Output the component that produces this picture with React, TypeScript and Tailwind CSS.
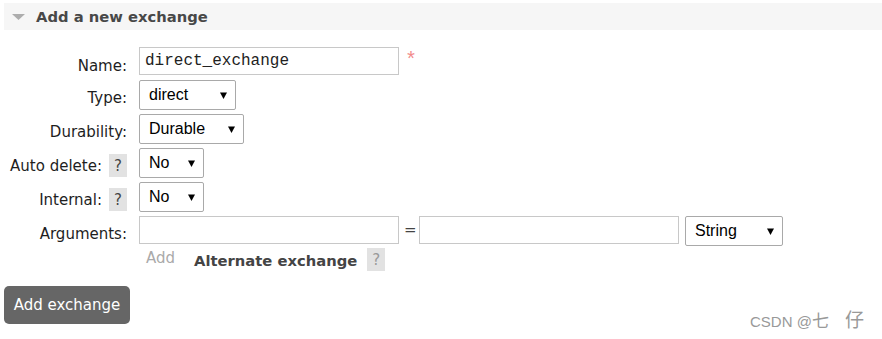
import React from "react";

const sans = "font-['DejaVu_Sans','Verdana',sans-serif]";

function Arrow() {
  return (
    <svg width="7" height="7" viewBox="0 0 7 7" className="shrink-0">
      <polygon points="0,0.5 7,0.5 3.5,7" fill="#000" />
    </svg>
  );
}

function Sel({ label, cls }: { label: string; cls: string }) {
  return (
    <div
      className={`flex h-[30px] items-center rounded-[2px] border border-[#a9a9a9] bg-white pl-[9px] pr-[8px] font-['Liberation_Sans',Arial,sans-serif] text-[16px] leading-[18px] text-black ${cls}`}
    >
      <span className="flex-1">{label}</span>
      <Arrow />
    </div>
  );
}

function TextInput({ value }: { value?: string }) {
  return (
    <div className="flex h-[28px] w-[260px] items-center border border-[#c8c8c8] bg-white pl-[5px] font-['Liberation_Mono','Courier_New',monospace] text-[16px] leading-[18px] text-[#222]">
      {value}
    </div>
  );
}

function Help({ dim }: { dim?: boolean }) {
  return (
    <div
      className={`flex h-[23px] w-[18px] items-center justify-center bg-[#e2e2e2] text-[15px] leading-[20px] ${
        dim ? "text-[#999]" : "text-[#444]"
      }`}
    >
      ?
    </div>
  );
}

function Label({ text, help }: { text: string; help?: boolean }) {
  return (
    <div className="flex w-[127px] shrink-0 items-start justify-end">
      <span className="pt-[8px] text-[15px] leading-[20px] text-[#1e1e1e]">{text}</span>
      {help && (
        <div className="ml-[7px] pt-[6px]">
          <Help />
        </div>
      )}
    </div>
  );
}

export default function App() {
  return (
    <div className={`relative h-[339px] w-[882px] overflow-hidden bg-white ${sans}`}>
      {/* header */}
      <div className="ml-[4px] mt-[3px] flex h-[27px] items-center bg-[#f6f6f6]">
        <svg width="13" height="6" viewBox="0 0 13 6" className="ml-[8px]">
          <polygon points="0,0 13,0 6.5,6" fill="#adadad" />
        </svg>
        <span className="ml-[11px] pt-[1px] text-[14.75px] font-bold leading-[20px] text-[#484848]">
          Add a new exchange
        </span>
      </div>

      <div className="mt-[17px] flex flex-col">
        {/* Name */}
        <div className="flex h-[33px] items-start">
          <div className="flex w-[127px] shrink-0 justify-end">
            <span className="pt-[9px] text-[15px] leading-[20px] text-[#1e1e1e]">Name:</span>
          </div>
          <div className="ml-[12px] flex items-start">
            <TextInput value="direct_exchange" />
            <span className="ml-[6px] mt-[4px] font-['Liberation_Mono',monospace] text-[20px] leading-[20px] text-[#f28b8b]">
              *
            </span>
          </div>
        </div>

        {/* Type */}
        <div className="flex h-[34px] items-start">
          <Label text="Type:" />
          <div className="ml-[12px]">
            <Sel label="direct" cls="w-[97px]" />
          </div>
        </div>

        {/* Durability */}
        <div className="flex h-[34px] items-start">
          <Label text="Durability:" />
          <div className="ml-[12px]">
            <Sel label="Durable" cls="w-[105px]" />
          </div>
        </div>

        {/* Auto delete */}
        <div className="flex h-[34px] items-start">
          <Label text="Auto delete:" help />
          <div className="ml-[12px]">
            <Sel label="No" cls="w-[65px]" />
          </div>
        </div>

        {/* Internal */}
        <div className="flex h-[34px] items-start">
          <Label text="Internal:" help />
          <div className="ml-[12px]">
            <Sel label="No" cls="w-[65px]" />
          </div>
        </div>

        {/* Arguments */}
        <div className="flex h-[32px] items-start">
          <Label text="Arguments:" />
          <div className="ml-[12px] flex items-start">
            <TextInput />
            <span className="ml-[5px] mt-[4px] w-[9px] text-[15px] leading-[20px] text-[#444]">=</span>
            <div className="ml-[6px]">
              <TextInput />
            </div>
            <div className="ml-[6px]">
              <Sel label="String" cls="w-[98px]" />
            </div>
          </div>
        </div>

        {/* Add / Alternate exchange */}
        <div className="flex h-[38px] items-start pl-[146px]">
          <span className="text-[15px] leading-[20px] text-[#aaa]">Add</span>
          <span className="ml-[19px] mt-[3px] text-[14.75px] font-bold leading-[20px] text-[#444]">
            Alternate exchange
          </span>
          <div className="ml-[10px]">
            <Help dim />
          </div>
        </div>

        {/* Button */}
        <div className="pl-[4px]">
          <div className="flex h-[38px] w-[126px] items-center justify-center rounded-[5px] bg-[#666] text-[15px] leading-[20px] text-white">
            Add exchange
          </div>
        </div>
      </div>

      {/* watermark */}
      <div className="absolute left-[750px] top-[311px] flex items-baseline font-['Liberation_Sans','Noto_Sans_CJK_SC',sans-serif] text-[15px] leading-[20px] text-[#999]">
        <span>CSDN @</span>
        <span className="text-[17px]">七</span>
        <span className="ml-[16px] text-[19px]">仔</span>
      </div>
    </div>
  );
}
